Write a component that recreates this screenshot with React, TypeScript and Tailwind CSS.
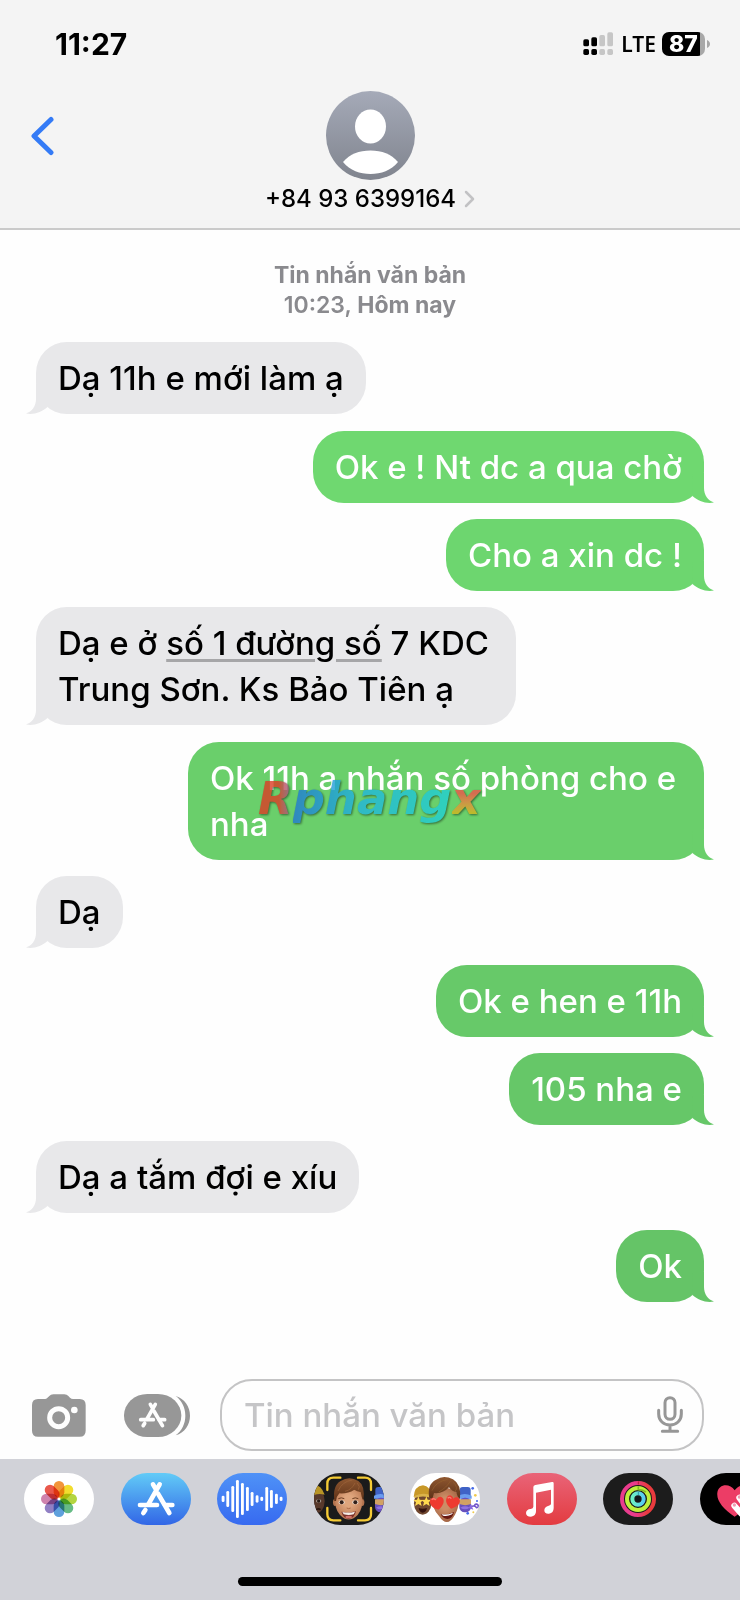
import React from "react";

type Side = "in" | "out";

interface Message {
  side: Side;
  text: React.ReactNode;
  tone: string;
  watermark?: boolean;
}

const IN_TONE = "bg-[#e8e8ea] text-[#e8e8ea]";

const messages: Message[] = [
  { side: "in", tone: IN_TONE, text: "Dạ 11h e mới làm ạ" },
  { side: "out", tone: "bg-[#6fd870] text-[#6fd870]", text: "Ok e ! Nt dc a qua chờ" },
  { side: "out", tone: "bg-[#6dd66f] text-[#6dd66f]", text: "Cho a xin dc !" },
  {
    side: "in",
    tone: IN_TONE,
    text: (
      <>
        Dạ e ở{" "}
        <a
          href="#map"
          className="underline decoration-[#a6a6a8] decoration-[3px] underline-offset-[4px]"
        >
          số 1 đường số
        </a>{" "}
        7 KDC Trung Sơn. Ks Bảo Tiên ạ
      </>
    ),
  },
  {
    side: "out",
    tone: "bg-[#6acf6b] text-[#6acf6b]",
    text: "Ok 11h a nhắn số phòng cho e nha",
    watermark: true,
  },
  { side: "in", tone: IN_TONE, text: "Dạ" },
  { side: "out", tone: "bg-[#67c969] text-[#67c969]", text: "Ok e hen e 11h" },
  { side: "out", tone: "bg-[#66c768] text-[#66c768]", text: "105 nha e" },
  { side: "in", tone: IN_TONE, text: "Dạ a tắm đợi e xíu" },
  { side: "out", tone: "bg-[#65c467] text-[#65c467]", text: "Ok" },
];

function Tail({ side }: { side: Side }) {
  return (
    <svg
      aria-hidden="true"
      viewBox="0 0 22 30"
      className={
        side === "in"
          ? "absolute bottom-0 -left-2.5 h-[30px] w-[22px]"
          : "absolute -right-2.5 bottom-0 h-[30px] w-[22px] -scale-x-100"
      }
    >
      <path
        d="M10 0V15C10 22 6 27.5 0 29.5C8 31 16 28 21.5 23L22 0Z"
        fill="currentColor"
      />
    </svg>
  );
}

function Watermark() {
  return (
    <div
      aria-hidden="true"
      className="pointer-events-none absolute top-[30px] left-[70px] flex font-['DejaVu_Sans',sans-serif] text-[45px] leading-[54px] font-bold italic opacity-80 drop-shadow-[1px_1px_1px_rgba(0,0,0,0.6)]"
    >
      <span className="bg-linear-to-r from-[#dc3c24] from-60% to-[#8a5a9a] bg-clip-text text-transparent">
        R
      </span>
      <span className="bg-linear-to-r from-[#2277d2] via-[#22b4dc] via-40% to-[#22d2d2] bg-clip-text text-transparent">
        phang
      </span>
      <span className="bg-linear-to-b from-[#f0554a] from-40% to-[#d2b41e] to-75% bg-clip-text text-transparent">
        x
      </span>
    </div>
  );
}

function Bubble({ message }: { message: Message }) {
  const incoming = message.side === "in";
  return (
    <li className={incoming ? "mb-[17px] flex justify-start" : "mb-4 flex justify-end"}>
      <div
        className={`relative rounded-[31px] px-[22px] py-[13px] ${message.tone} ${
          incoming ? "max-w-[480px]" : "max-w-[516px]"
        }`}
      >
        <Tail side={message.side} />
        <p
          className={`relative text-[33px] leading-[46px] font-medium ${
            incoming ? "text-black" : "text-white"
          }`}
        >
          {message.text}
        </p>
        {message.watermark && <Watermark />}
      </div>
    </li>
  );
}

function StatusIcons() {
  return (
    <div className="flex items-center">
      <svg aria-hidden="true" viewBox="0 0 90 72" className="h-6 w-[30px]">
        <g fill="#000">
          <rect x="1" y="22" width="17" height="21" rx="5" />
          <rect x="1" y="51" width="17" height="18" rx="5" />
          <rect x="25" y="16" width="17" height="27" rx="5" />
          <rect x="25" y="51" width="17" height="18" rx="5" />
        </g>
        <g fill="#c6c6c6">
          <rect x="49" y="9" width="17" height="34" rx="5" />
          <rect x="49" y="51" width="17" height="18" rx="5" />
          <rect x="73" y="1" width="17" height="42" rx="5" />
          <rect x="73" y="51" width="17" height="18" rx="5" />
        </g>
      </svg>
      <span className="ml-2 font-['Noto_Sans',sans-serif] text-[21px] leading-6 font-semibold">LTE</span>
      <div className="ml-1.5 flex h-6 w-[43px] items-center justify-center rounded-[7px] bg-linear-to-r from-black from-89% to-[#a8a8a8] to-89% text-[23px] leading-6 font-extrabold text-white">
        87
      </div>
      <svg aria-hidden="true" viewBox="0 0 5 8" className="h-2 w-[5px]">
        <path d="M2 0C6 1.5 6 6.5 2 8Z" fill="#a8a8a8" />
      </svg>
    </div>
  );
}

function Avatar() {
  return (
    <svg aria-hidden="true" viewBox="0 0 89 89" className="size-[89px]">
      <defs>
        <linearGradient id="avatar" x1="0" y1="0" x2="0" y2="1">
          <stop offset="0" stopColor="#a5aab8" />
          <stop offset="1" stopColor="#80848e" />
        </linearGradient>
      </defs>
      <circle cx="44.5" cy="44.5" r="44.5" fill="url(#avatar)" />
      <ellipse cx="44.5" cy="35.5" rx="15.5" ry="17" fill="#fff" />
      <path d="M17 71C24 63 33 59.500 44.500 59.500S65 63 72 71C65 79.500 55 83 44.500 83S24 79.500 17 71Z" fill="#fff" />
    </svg>
  );
}

function AppGlyph() {
  return (
    <>
      <path d="M96 34L103 46M116 34L82 94" />
      <path d="M57 96H108M132 96H154M73 111L67 120" />
      <path d="M111 62L145 120" />
    </>
  );
}

const petals = ["#f2953a", "#f2dd2e", "#b4d540", "#66bb85", "#5fa0dc", "#9180c4", "#cf83ad", "#e9584c"];

function PhotosIcon() {
  return (
    <>
      <rect width="210" height="156" fill="#fff" />
      {petals.map((color, i) => (
        <rect
          key={color}
          x="89"y="24"
          width="32"
          height="50"
          rx="16"
          fill={color}
          transform={`rotate(${i * 45} 105 78)`}
          className="mix-blend-multiply"
        />
      ))}
    </>
  );
}

function StoreIcon() {
  return (
    <>
      <linearGradient id="store" x1="0" y1="0" x2="0" y2="1">
        <stop offset="0" stopColor="#62cbf7" />
        <stop offset="1" stopColor="#3266e6" />
      </linearGradient>
      <rect width="210" height="156" fill="url(#store)" />
      <g stroke="#fff" strokeWidth="14" strokeLinecap="round" fill="none">
        <AppGlyph />
      </g>
    </>
  );
}

const waves = [
  [18, 68, 87], [32, 54, 102], [47, 39, 117], [61, 21, 135], [76, 30, 126], [91, 42, 114],
  [105, 57, 99], [120, 67, 89], [134, 71, 84], [149, 42, 114], [163, 51, 105], [178, 62, 93], [192, 71, 84],
];

function WaveIcon() {
  return (
    <>
      <linearGradient id="wave" x1="0" y1="0" x2="0" y2="1">
        <stop offset="0" stopColor="#4f92f7" />
        <stop offset="1" stopColor="#376af0" />
      </linearGradient>
      <rect width="210" height="156" fill="url(#wave)" />
      {waves.map(([x, top, bottom]) => (
        <rect key={x} x={x - 4} y={top} width="8.500" height={bottom - top} rx="4" fill="#fff" />
      ))}
    </>
  );
}

function Party({ x, y }: { x: number; y: number }) {
  return (
    <g transform={`translate(${x} ${y})`}>
      <rect x="1" y="4" width="33" height="36" rx="9" fill="#3f62c6" />
      <path d="M-3 30Q16 20 37 30V39H-3Z" fill="#6a9cf0" />
      <rect x="0" y="36" width="35" height="44" rx="16" fill="#6750bd" />
      <path d="M0 41H35V55Q18 62 0 55Z" fill="#d2a263" />
      <path d="M3 66Q17 58 31 66Q17 76 3 66Z" fill="#8f72e2" />
    </g>
  );
}

function MemojiIcon() {
  return (
    <>
      <radialGradient id="skin" cx="0.5" cy="0.4" r="0.6">
        <stop offset="0.3" stopColor="#dfa57d" />
        <stop offset="1" stopColor="#b97650" />
      </radialGradient>
      <linearGradient id="hair" x1="0" y1="0" x2="0" y2="1">
        <stop offset="0" stopColor="#8f5730" />
        <stop offset="1" stopColor="#5c3118" />
      </linearGradient>
      <rect width="210" height="156" fill="#1b1b1b" />
      <ellipse cx="8" cy="84" rx="24" ry="36" fill="#58392b" />
      <path d="M0 35Q22 35 32 65Q16 60 0 66Z" fill="#b99526" />
      <ellipse cx="14" cy="84" rx="8" ry="5" fill="#b5a99f" />
      <circle cx="14" cy="84" r="5" fill="#281a14" />
      <path d="M3 112Q12 105 20 110" stroke="#27160f" strokeWidth="5" fill="none" />
      <Party x={183} y={38} />
      <g fill="none" stroke="#f5cb35" strokeWidth="7" strokeLinecap="round">
        <path d="M40 51V32Q40 14 58 14H79" />
        <path d="M132 14H153Q171 14 171 32V51" />
        <path d="M40 105V124Q40 142 58 142H79" />
        <path d="M132 142H153Q171 142 171 124V105" />
      </g>
      <ellipse cx="63" cy="88" rx="6" ry="11" fill="#b5744f" />
      <ellipse cx="145" cy="88" rx="6" ry="11" fill="#b5744f" />
      <path d="M63 60Q104 33 146 60Q148 108 131 126Q104 153 78 126Q60 108 63 60Z" fill="url(#skin)" />
      <path d="M61 84Q55 38 80 24Q106 8 133 24Q155 38 148 84Q142 72 140 57Q128 56 121 50Q101 63 76 61Q68 69 66 84Z" fill="url(#hair)" />
      <path d="M72 54Q85 25 115 21M93 55Q114 50 123 30M133 50Q140 42 130 30" stroke="#a0663c" strokeWidth="2" fill="none" />
      <path d="M73 77Q82 72 91 77M115 77Q124 72 133 77" stroke="#6b3c21" strokeWidth="3" fill="none" />
      <ellipse cx="83" cy="88" rx="9" ry="6" fill="#e9dcd2" />
      <ellipse cx="124" cy="88" rx="9" ry="6" fill="#e9dcd2" />
      <circle cx="83" cy="88" r="6" fill="#33201a" />
      <circle cx="124" cy="88" r="6" fill="#33201a" />
      <path d="M98 105Q104 109 110 105" stroke="#ac6b49" strokeWidth="3" fill="none" />
      <path d="M82 116Q104 121 126 115Q121 137 104 137Q88 136 82 116Z" fill="#7b3028" />
      <path d="M85 117Q104 121 123 116L119 124Q104 128 89 124Z" fill="#f3ece6" />
      <ellipse cx="104" cy="132" rx="10" ry="4" fill="#d0716b" />
    </>
  );
}

function StickerIcon() {
  const heart = "M0 22C-18 12 -22 2 -20 -8C-17 -20 -5 -20 0 -9C7 -20 20 -17 21 -6C22 6 12 15 0 22Z";
  const star = "M0 -15L4 -5L15 -4L7 3L10 14L0 8L-10 14L-7 3L-15 -4L-4 -5Z";
  return (
    <>
      <radialGradient id="tan" cx="0.5" cy="0.45" r="0.6">
        <stop offset="0.3" stopColor="#cc8d66" />
        <stop offset="1" stopColor="#9f6040" />
      </radialGradient>
      <rect width="210" height="156" fill="#fff" />
      <ellipse cx="38" cy="91" rx="26" ry="34" fill="#70472f" />
      <path d="M11 72Q13 39 39 37Q61 39 66 70Q38 61 11 72Z" fill="#c89828" />
      <path d="M13 69Q39 57 65 67V75Q39 66 13 75Z" fill="#dbb34a" />
      <path d={star} transform="translate(25 85)" fill="#ffd94f" />
      <path d={star} transform="translate(49 85)" fill="#ffd94f" />
      <path d="M26 105Q38 110 51 105Q48 119 38 119Q28 118 26 105Z" fill="#34120e" />
      <Party x={148} y={38} />
      <path d="M181 101Q194 96 200 104Q207 104 204 96Q198 90 193 98" stroke="#7255ca" strokeWidth="5" fill="none" />
      <path d="M176 105L183 93L190 110Z" fill="#8a6ade" />
      <circle cx="188" cy="46" r="4" fill="#4469e9" />
      <circle cx="196" cy="67" r="4" fill="#f1cb4e" />
      <circle cx="201" cy="84" r="3" fill="#4469e9" />
      <circle cx="173" cy="121" r="4" fill="#4469e9" />
      <circle cx="190" cy="118" r="3" fill="#f1cb4e" />
      <path d="M65 63Q104 28 145 61Q150 99 135 125Q112 167 87 129Q64 106 65 63Z" fill="url(#tan)" />
      <path d="M58 76Q50 34 78 20Q101 5 129 19Q155 34 150 78Q142 73 139 57Q125 55 117 43Q99 63 72 60Q69 71 67 79Z" fill="url(#hair)" />
      <path d="M66 53Q77 26 113 19M86 57Q110 44 121 24M135 55Q146 44 130 28" stroke="#96602f" strokeWidth="2" fill="none" />
      <path d={heart} transform="translate(81 89) rotate(-12)" fill="#ee3a30" />
      <path d={heart} transform="translate(128 86) rotate(13)" fill="#ee3a30" />
      <path d="M65 80Q72 74 77 81M113 76Q119 70 124 77" stroke="#ff7a70" strokeWidth="4" fill="none" />
      <path d="M92 124Q112 127 132 117Q128 137 112 138Q98 136 92 124Z" fill="#681912" />
      <path d="M95 124Q112 127 129 119L126 124Q112 131 99 128Z" fill="#fff" />
    </>
  );
}

function MusicIcon() {
  return (
    <>
      <linearGradient id="music" x1="0" y1="0" x2="0" y2="1">
        <stop offset="0" stopColor="#e96478" />
        <stop offset="1" stopColor="#e33b40" />
      </linearGradient>
      <rect width="210" height="156" fill="url(#music)" />
      <path
        fill="#fff"
        d="M79 42Q79 37 85 36L135 27Q140 26 140 31V105Q140 120 126 122Q112 123 112 112Q112 101 125 98Q132 97 132 92V50L87 59V115Q87 130 72 131Q57 131 57 120Q58 109 71 108Q79 107 79 101Z"
      />
    </>
  );
}

function ActivityIcon() {
  return (
    <>
      <linearGradient id="move" x1="0" y1="0" x2="1" y2="0">
        <stop offset="0.4" stopColor="#e93c8d" />
        <stop offset="0.8" stopColor="#e93b3e" />
      </linearGradient>
      <linearGradient id="stand" x1="0" y1="0" x2="1" y2="0">
        <stop offset="0" stopColor="#6cf0c4" />
        <stop offset="1" stopColor="#58ccf2" />
      </linearGradient>
      <rect width="210" height="156" fill="#1c1c1c" />
      <circle cx="105" cy="78" r="48" fill="none" stroke="url(#move)" strokeWidth="12" />
      <circle cx="105" cy="78" r="33" fill="none" stroke="#bff03c" strokeWidth="12" />
      <circle cx="105" cy="78" r="17" fill="none" stroke="url(#stand)" strokeWidth="12" />
      <path d="M106 40V50Q120 50 129 57" stroke="#80bd24" strokeWidth="5" fill="none" />
      <path d="M106 25V34" stroke="#b51e39" strokeWidth="3" />
      <path d="M106 57V66" stroke="#2b9ba7" strokeWidth="3" />
      <circle cx="105" cy="78" r="8" fill="#101820" />
    </>
  );
}

function TouchIcon() {
  return (
    <>
      <rect width="210" height="156" fill="#000" />
      <path d="M104 131C70 108 49 84 52 59C55 34 88 28 104 52C120 28 155 34 157 59C159 84 138 108 104 131Z" fill="#ec3d66" />
      <g stroke="#fff" strokeWidth="18" strokeLinecap="round">
        <path d="M103 98L124 122M118 74L142 108" />
      </g>
      <circle cx="103" cy="96" r="5" fill="#ef9ab0" />
      <circle cx="118" cy="72" r="5" fill="#ef9ab0" />
    </>
  );
}

const apps = [
  { name: "Ảnh", Icon: PhotosIcon },
  { name: "App Store", Icon: StoreIcon },
  { name: "Âm thanh", Icon: WaveIcon },
  { name: "Memoji", Icon: MemojiIcon },
  { name: "Nhãn dán", Icon: StickerIcon },
  { name: "Nhạc", Icon: MusicIcon },
  { name: "Hoạt động", Icon: ActivityIcon },
  { name: "Digital Touch", Icon: TouchIcon },
];

export default function App() {
  return (
    <div className="flex min-h-screen flex-col overflow-hidden bg-[#fefefe] font-[Inter,'Noto_Sans',sans-serif] text-black">
      <header className="border-b-2 border-[#cacaca] bg-[#f4f4f4]">
        <div className="flex h-[88px] items-center justify-between pr-[30px] pl-[55px]">
          <time className="text-[30px] leading-8 font-bold">11:27</time>
          <StatusIcons />
        </div>
        <div className="grid grid-cols-[1fr_auto_1fr] items-start pt-[3px] pb-3.5">
          <button type="button" aria-label="Quay lại" className="ml-[30px] flex h-[89px] w-12 items-center">
            <svg aria-hidden="true" viewBox="0 0 24 40" className="h-10 w-6">
              <path d="M21 3.500L4 20L21 36.500" fill="none" stroke="#347bf6" strokeWidth="5" strokeLinecap="round" strokeLinejoin="round" />
            </svg>
          </button>
          <button type="button" className="flex flex-col items-center gap-1">
            <Avatar />
            <span className="flex items-center gap-2 text-[24px] leading-[30px] font-medium">
              +84 93 6399164
              <svg aria-hidden="true" viewBox="0 0 11 18" className="h-[18px] w-[11px]">
                <path d="M2 2L9 9L2 16" fill="none" stroke="#c2c2c4" strokeWidth="2.500" strokeLinecap="round" strokeLinejoin="round" />
              </svg>
            </span>
          </button>
        </div>
      </header>

      <main className="flex-1 px-9 pt-[30px]">
        <p className="mb-[22px] text-center text-[23px] leading-[30px] font-bold text-[#8a8a8e]">
          Tin nhắn văn bản
          <br />
          <span className="font-semibold">10:23,</span> Hôm nay
        </p>
        <ol>
          {messages.map((message, i) => (
            <Bubble key={i} message={message} />
          ))}
        </ol>
      </main>

      <footer>
        <form className="flex items-center pr-9 pb-2 pl-8" onSubmit={(e) => e.preventDefault()}>
          <button type="button" aria-label="Máy ảnh">
            <svg aria-hidden="true" viewBox="0 0 162 129" className="h-[43px] w-[54px]">
              <path
                fill="#979797"
                d="M18 15H40Q44 15 48 10L52 6Q56 1 64 1H97Q105 1 109 6L114 11Q118 15 123 15H143Q161 15 161 33V110Q161 128 143 128H18Q0 128 0 110V33Q0 15 18 15Z"
              />
              <circle cx="80" cy="71" r="27" fill="none" stroke="#fefefe" strokeWidth="15" />
              <circle cx="127" cy="48" r="10" fill="#fefefe" />
            </svg>
          </button>
          <button type="button" aria-label="Ứng dụng" className="ml-[38px]">
            <svg aria-hidden="true" viewBox="0 0 198 129" className="h-[43px] w-[66px]">
              <rect width="172" height="129" rx="70" ry="64" fill="#979797" />
              <path d="M155 6C182 14 198 38 198 65C198 92 182 116 155 124C174 110 184 88 184 65C184 42 174 20 155 6Z" fill="#979797" />
              <g transform="translate(8 6) scale(0.74)" stroke="#fefefe" strokeWidth="15" strokeLinecap="round" fill="none">
                <AppGlyph />
              </g>
            </svg>
          </button>
          <div className="ml-[30px] flex h-[72px] min-w-0 flex-1 items-center rounded-[32px] border-2 border-[#c4c4c5] pr-[19px] pl-[22px]">
            <input
              type="text"
              aria-label="Tin nhắn văn bản"
              placeholder="Tin nhắn văn bản"
              className="h-[46px] min-w-0 flex-1 bg-transparent text-[33px] leading-[46px] font-medium outline-none placeholder:text-[#c5c5c7]"
            />
            <button type="button" aria-label="Đọc chính tả">
              <svg aria-hidden="true" viewBox="0 0 78 114" className="h-[38px] w-[26px]">
                <g fill="none" stroke="#979797" strokeWidth="9" strokeLinecap="round">
                  <rect x="24" y="5" width="30" height="65" rx="15" />
                  <path d="M5 43V54C5 74 20 87 39 87S73 74 73 54V43M39 87V105M16 106H62" />
                </g>
              </svg>
            </button>
          </div>
        </form>
        <div className="overflow-hidden bg-[#d1d2d8] pt-3.5 pb-3.5">
          <nav aria-label="Ứng dụng iMessage" className="-mr-[30px] flex justify-between pl-6">
            {apps.map(({ name, Icon }) => (
              <button
                key={name}
                type="button"
                aria-label={name}
                className="h-[52px] w-[70px] shrink-0 overflow-hidden rounded-[28px]"
              >
                <svg aria-hidden="true" viewBox="0 0 210 156" className="h-[52px] w-[70px]">
                  <Icon />
                </svg>
              </button>
            ))}
          </nav>
          <div className="mx-auto mt-[52px] h-[9px] w-[264px] rounded-full bg-black" />
        </div>
      </footer>
    </div>
  );
}
